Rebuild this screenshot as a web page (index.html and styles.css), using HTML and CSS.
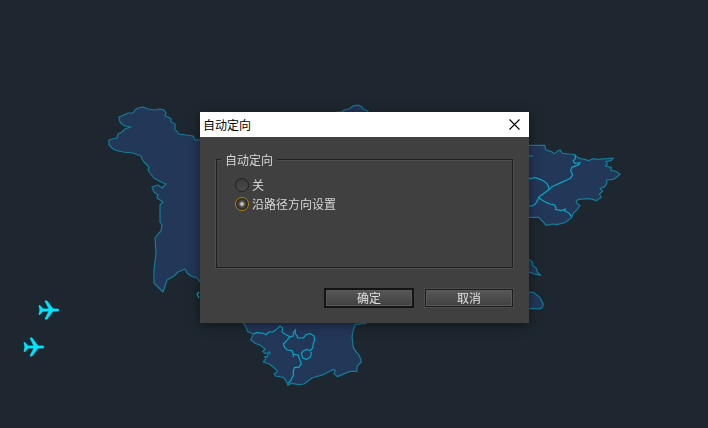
FILE: index.html
```html
<!DOCTYPE html>
<html lang="zh-CN">
<head>
<meta charset="utf-8">
<title>自动定向</title>
<link rel="stylesheet" href="styles.css">
</head>
<body>
<svg class="map" viewBox="0 0 708 428" preserveAspectRatio="xMidYMid slice" aria-hidden="true">
  <g class="region">
    <path d="M220 141L200 140l-5 0-2-4-7-1-7-1-4-5 0-5-4-2 0-3-3-2-3-1 1-3-2-3-4-1-5 1-7-1-5-2-5 1-3 2-2 3-5 0-4 2-5 2 1 5 2 2 3 2 6 1-6 2-3 3-4 2-1 4-5 1-3 1 0 5 3 3 3 2 8 2 10 1 8 3 1 3 2 3 5 5-1 3 2 3 4 5 7 4 5 2-4 4-4-3-6 2 2 5 4 3-1 3 6 4-3 3 0 17 2 3-1 6-3 3-3 4 1 15-2 17 0 13 4 4 5 5 4-12 7-4 4-4 7-3 2 4 4 3 6 2 4 5h20z"/>
    <path d="M334 116l3-4 5 0 2-2 5-1 4-3 5-1 4 2 1 2 5 2-1 5z"/>
  </g>
  <g class="region detail" transform="translate(510 130) scale(.3333)">
    <path d="M40 46H104l4 14 14 4 12 7 8-7 8-4 8 10 20 2 16 2 8 8 10 4 12 2 12 4 12-6 14 2 28-2 20-2-6 8-16 2 4 8-6 6 18 4-2 8 14 4 14 8-10 10-10 6-20 2 0 10-6 10-14 6 8 8-10 8 6 10-16 10-10-4-12-2-30 2-8 6 4 8 8 4-8 12-12 12-6 14-20 14-24 6-10-2-22 4-8-10-14-14H40z"/>
    <path d="M50 385l10 5 8 8v8l12 10 2 10 10 10-18-4-24-8zM50 485l22 3 8 7 10 8 10 20-4 10-8 4-18-2-20 2z"/>
  </g>
  <g class="border detail" transform="translate(510 130) scale(.3333)">
    <path d="M196 74v12l-6 6 4 8 16-2-4 6-20 8-4 10 6 12-6 10-16 8-40 18-8 8-30 22-6 12-6 10-8 6H50M50 144l14 2 10-4 10 4 16 6 10 8 6 10v14M84 202l12 8 14 8 10 4 12 2 6 8-2 6 16 4 14-4-2 4 14 8 6 10M50 78h18"/>
  </g>
  <g class="region detail" transform="translate(230 310) scale(.3333)">
    <path d="M38 38l10 12 4 14 18 8-8 18 14 10 14 5 16 13-8 6 6 6 16-4v6h-8v8h-8l4 6-8 10 18 6 20 16 4 8-10 6 4 6 24 4 8 10 6 14 10-6 24 4 14-2 24-18 34-10 22-12 10-4 4 4-4 8 10 10 38-16h20l2-16 12-12-2-10-6-12-10-12-6-10-2-16-2-16 4-20 6-16 32-4V20H38z"/>
  </g>
  <g class="border detail" transform="translate(230 310) scale(.3333)">
    <path d="M70 72l10-4 20 2 8 4 8-8 14 0 12-10 8-8 8 6-2 12 8 6 16 8-10 12-10 10 4 10 8 8 14 2 4 10 16 4M180 80l10-2 0-10 6-8 0 12 6 6 0 6 18 0 8-10 12-4 12 8 2 12-4 10-2 14-8 8-8-4-12 4-6 8 4 14 12 4 12-8 2-14M190 130v12M206 134v8l4 8 4 12-8 10-12 0-4 10v14l-8 16-8 8"/>
  </g>
  <path class="border" d="M199 292l-2 2 2 4"/>
  <g class="plane">
    <path id="plane" d="M39 305.500h1l3 3.500h6l-4-8h2l6 8h4q2 0 2 1t-2 1h-4l-6 8h-2l4-8h-6l-3 3.500h-1l1-4.500z"/>
    <use href="#plane" x="-15" y="37"/>
  </g>
</svg>
<main class="desktop">
  <form class="dialog" role="dialog" aria-labelledby="dialog-title">
    <header class="titlebar">
      <h1 class="title" id="dialog-title">自动定向</h1>
      <button class="close" type="button" aria-label="关闭">
        <svg class="close-icon" viewBox="0 0 11 11" aria-hidden="true"><path d="M.5.5l10 10M10.500.5l-10 10"/></svg>
      </button>
    </header>
    <div class="content">
      <fieldset class="group">
        <legend class="legend">自动定向</legend>
        <label class="option"><input class="radio" type="radio" name="orient"><span>关</span></label>
        <label class="option"><input class="radio" type="radio" name="orient" checked><span>沿路径方向设置</span></label>
      </fieldset>
      <div class="actions">
        <button class="button primary" type="submit">确定</button>
        <button class="button" type="button">取消</button>
      </div>
    </div>
  </form>
</main>
</body>
</html>
```

FILE: styles.css
```css
* {
  box-sizing: border-box;
}

body {
  margin: 0;
  background: #1e2730;
  color: #d6d6d6;
  font: 12px/19px "Noto Sans CJK SC", sans-serif;
}

.map {
  position: fixed;
  inset: 0;
  width: 100%;
  height: 100%;
}

.region {
  fill: #233759;
  stroke: #127d98;
  stroke-width: 1.2;
  stroke-linejoin: round;
}

.border {
  fill: none;
  stroke: #0aa5c5;
  stroke-width: 1.2;
}

.detail {
  stroke-width: 3.6;
}

.plane {
  fill: #00e5ff;
  stroke: #00e5ff;
  stroke-width: .8;
  stroke-linejoin: round;
}

.desktop {
  position: relative;
  display: flex;
  justify-content: center;
  align-items: center;
  min-height: 100vh;
  padding: 7px 0 0 21px;
}

.dialog {
  width: 329px;
  max-width: 100%;
  background: #404040;
  box-shadow: 0 2px 12px rgba(0, 0, 0, .45);
}

.titlebar {
  display: flex;
  justify-content: space-between;
  align-items: center;
  height: 25px;
  padding: 0 3px;
  background: #fff;
  color: #000;
}

.title {
  margin: 0;
  font-size: 12px;
  font-weight: 400;
}

.close {
  display: flex;
  padding: 6px;
  border: 0;
  background: none;
}

.close-icon {
  width: 11px;
  height: 11px;
  fill: none;
  stroke: #000;
  stroke-width: 1.1;
}

.content {
  padding: 13px 16px 15px;
}

.group {
  min-width: 0;
  min-height: 118px;
  margin: 0 0 20px;
  padding: 6px 18px;
  border: 1px solid #202020;
  box-shadow: -1px 1px 0 #4e4e4e, 1px 1px 0 #4e4e4e, inset 0 1px 0 #4e4e4e;
}

.legend {
  margin-left: -14px;
  padding: 0 4px;
  background: #404040;
}

.option {
  display: flex;
  align-items: center;
  gap: 3px;
}

.radio {
  appearance: none;
  width: 14px;
  height: 14px;
  margin: 0;
  border: 1px solid #202020;
  border-radius: 50%;
  background: linear-gradient(#3a3a3a, #4b4b4b);
}

.radio:checked {
  border: 1px solid #b58500;
  background: radial-gradient(circle, #c8c8c8 0 1px, #444 3px 4px, #262626 5px);
}

.actions {
  display: flex;
  justify-content: flex-end;
  align-items: center;
  gap: 11px;
}

.button {
  width: 88px;
  height: 18px;
  padding: 0;
  border: 1px solid #1c1c1c;
  background: linear-gradient(#575757, #414141);
  box-shadow: inset 0 0 0 1px #5a5a5a, 0 0 0 1px #4b4b4b;
  color: #e0e0e0;
  font: inherit;
  line-height: 14px;
}

.primary {
  width: 90px;
  height: 20px;
  border: 2px solid #141414;
  box-shadow: inset 0 0 0 1px #5a5a5a;
}
```
